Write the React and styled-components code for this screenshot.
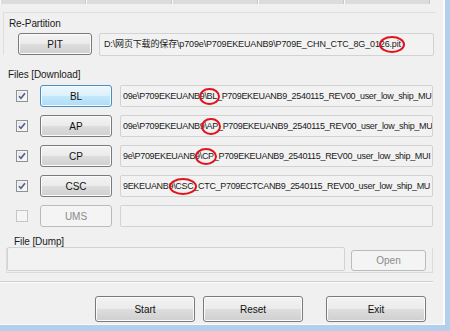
import React from 'react';
import styled, { createGlobalStyle, css } from 'styled-components';

const Global = createGlobalStyle`
  html, body { margin: 0; padding: 0; background: #f0f0f0; }
  body {
    width: 450px;
    height: 331px;
    overflow: hidden;
    font-family: "Liberation Sans", Arial, "Noto Sans CJK SC", sans-serif;
    color: #1a1a1a;
  }
`;

const Frame = styled.div`
  width: 450px;
  height: 331px;
  box-sizing: border-box;
  background: #f0f0f0;
  border-right: 5px solid #b3cfec;
  border-bottom: 6px solid #b3cfec;
  overflow: hidden;
`;

const Inner = styled.div`
  height: 100%;
  box-sizing: border-box;
  border-right: 2px solid #fbfbfb;
  border-bottom: 1px solid #fbfbfb;
  display: flex;
  flex-direction: column;
`;

const Tabs = styled.div`
  display: flex;
  width: 430px;
  height: 4px;
  margin-bottom: 8px;
`;

const Tab = styled.div`
  flex: 1;
  background: #dcdcdc;
  border-left: 1px solid #fafafa;
  border-right: 1px solid #c8c8c8;
`;

const Group = styled.div`
  margin-left: 3px;
  width: 432px;
  border-top: 1px solid #dedede;
  border-left: 1px solid #dedede;
  padding-top: 5px;
`;

const Legend = styled.div`
  position: relative;
  z-index: 1;
  font-size: 10px;
  line-height: 11px;
  height: 11px;
  padding-left: ${p => p.$indent || 5}px;
  margin-top: ${p => p.$top || 0}px;
  letter-spacing: -0.1px;
`;

const Row = styled.div`
  display: flex;
  align-items: center;
  height: 22px;
  margin-top: ${p => p.$top || 0}px;
`;

const Button = styled.div`
  box-sizing: border-box;
  width: ${p => p.$w || 72}px;
  height: ${p => p.$h || 22}px;
  margin-left: ${p => p.$left || 0}px;
  flex: none;
  display: flex;
  align-items: center;
  justify-content: center;
  font-size: 10px;
  border-radius: 3px;
  border: 1px solid #7a7a7a;
  color: #111;
  background: linear-gradient(#f3f3f3 0%, #ebebeb 48%, #dddddd 52%, #cfcfcf 100%);
  box-shadow: inset 0 0 0 1px #fbfbfb;
  ${p => p.$hot && css`
    border-color: #4b8bbf;
    background: linear-gradient(#ebf7fd 0%, #dcf1fc 48%, #c3e7fb 52%, #addcf6 100%);
    box-shadow: inset 0 0 0 1px #f5fbfe;
  `}
  ${p => p.$off && css`
    border-color: #b8bcbe;
    background: #f4f4f4;
    color: #8a8a8a;
    box-shadow: none;
  `}
`;

const Field = styled.div`
  box-sizing: border-box;
  width: ${p => p.$w}px;
  height: ${p => p.$h || 22}px;
  margin-left: ${p => p.$left || 0}px;
  flex: none;
  border: 1px solid #d2d2d2;
  border-radius: 2px;
  background: #f2f2f2;
  overflow: hidden;
  white-space: nowrap;
  font-size: 9px;
  line-height: ${p => (p.$h || 22) - 2}px;
  padding-left: ${p => p.$pad ?? 2}px;
  letter-spacing: ${p => p.$tight ? -0.32 : -0.15}px;
`;

const Mark = styled.span`
  position: relative;
  &::after {
    content: '';
    position: absolute;
    left: ${p => p.$l || -3}px;
    right: ${p => p.$r || -3}px;
    top: -3px;
    bottom: -4px;
    border: 2px solid #e0151c;
    border-radius: 50%;
  }
`;

const Box = styled.div`
  box-sizing: border-box;
  width: 12px;
  height: 12px;
  margin-left: 16px;
  flex: none;
  border: 1px solid #8f9091;
  background: linear-gradient(135deg, #e2e2e2, #fbfbfb);
  box-shadow: inset 0 0 0 1px #f5f5f5;
  display: flex;
  align-items: center;
  justify-content: center;
  ${p => p.$off && css`
    border-color: #c6c6c6;
    background: #f5f5f5;
  `}
`;

const DumpGroup = styled.div`
  box-sizing: border-box;
  margin-left: 6px;
  width: 427px;
  height: 26px;
  border: 1px solid #dcdcdc;
  border-top-color: transparent;
  display: flex;
  align-items: flex-end;
  padding-bottom: 1px;
`;

const Separator = styled.div`
  width: 433px;
  height: 1px;
  margin-top: 8px;
  background: #cfcfcf;
  border-bottom: 1px solid #fafafa;
`;

const Footer = styled.div`
  display: flex;
  align-items: center;
  margin-top: 13px;
`;

function Check({ on }) {
  return (
    <Box $off={!on}>
      {on && (
        <svg width="8" height="8" viewBox="0 0 8 8">
          <path d="M1 4.2 L3 6.3 L7 1.2" fill="none" stroke="#4d6190" strokeWidth="1.6" />
        </svg>
      )}
    </Box>
  );
}

const files = [
  { name: 'BL', hot: true, pre: '09e\\P709EKEUANB9', mark: '\\BL', post: '_P709EKEUANB9_2540115_REV00_user_low_ship_MU', l: -5, r: -3 },
  { name: 'AP', pre: '09e\\P709EKEUANB9', mark: '\\AP', post: '_P709EKEUANB9_2540115_REV00_user_low_ship_MUI', l: -3, r: -3 },
  { name: 'CP', pre: '9e\\P709EKEUANB9', mark: '\\CP', post: '_P709EKEUANB9_2540115_REV00_user_low_ship_MUI', l: -5, r: -3 },
  { name: 'CSC', pre: '9EKEUANB9', mark: '\\CSC', post: '_CTC_P709ECTCANB9_2540115_REV00_user_low_ship_MU', l: -4, r: -4 },
];

export default function App() {
  return (
    <>
      <Global />
      <Frame>
        <Inner>
          <Tabs>
            <Tab /><Tab /><Tab /><Tab /><Tab />
          </Tabs>
          <Group>
            <Legend>Re-Partition</Legend>
            <Row $top={4}>
              <Button $left={14} $w={74}>PIT</Button>
              <Field $left={7} $w={335} $h={23} $pad={4}>
                D:\网页下载的保存\p709e\P709EKEUANB9\P709E_CHN_CTC_8G_012<Mark $l={-6} $r={-4}>6.pit</Mark>
              </Field>
            </Row>
          </Group>
          <Legend $indent={8} $top={14}>Files [Download]</Legend>
          {files.map((f, i) => (
            <Row key={f.name} $top={i === 0 ? 5 : 8}>
              <Check on />
              <Button $left={12} $hot={f.hot}>{f.name}</Button>
              <Field $left={8} $w={313} $tight>
                {f.pre}<Mark $l={f.l} $r={f.r}>{f.mark}</Mark>{f.post}
              </Field>
            </Row>
          ))}
          <Row $top={8}>
            <Check on={false} />
            <Button $left={12} $off>UMS</Button>
            <Field $left={8} $w={313} />
          </Row>
          <Legend $indent={14} $top={9}>File [Dump]</Legend>
          <DumpGroup>
            <Field $left={0} $w={338} $h={24} />
            <Button $left={6} $w={75} $h={21} $off>Open</Button>
          </DumpGroup>
          <Separator />
          <Footer>
            <Button $left={95} $w={100} $h={26}>Start</Button>
            <Button $left={8} $w={100} $h={26}>Reset</Button>
            <Button $left={23} $w={100} $h={26}>Exit</Button>
          </Footer>
        </Inner>
      </Frame>
    </>
  );
}
